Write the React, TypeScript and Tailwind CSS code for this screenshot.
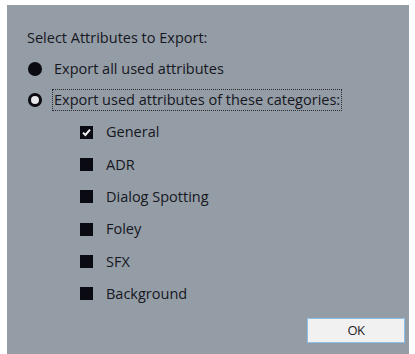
import React from 'react'

const categories = [
  { name: 'General', checked: true },
  { name: 'ADR', checked: false },
  { name: 'Dialog Spotting', checked: false },
  { name: 'Foley', checked: false },
  { name: 'SFX', checked: false },
  { name: 'Background', checked: false },
]

function Box({ checked }: { checked: boolean }) {
  return (
    <div className="w-[13px] h-[13px] bg-[#0a0a12] flex items-center justify-center shrink-0">
      {checked && (
        <svg width="11" height="11" viewBox="0 0 11 11">
          <path d="M2 5.6 L4.4 8 L9 2.6" stroke="#f2f2f2" strokeWidth="2" fill="none" />
        </svg>
      )}
    </div>
  )
}

export default function App() {
  return (
    <div className="w-[415px] h-[354px] bg-white pl-[7px] pt-[5px] pr-[6px] overflow-hidden" style={{ fontFamily: '"Open Sans", "Noto Sans", sans-serif' }}>
      <div className="h-full bg-[#949da5] text-[#16161f] text-[14.5px] flex flex-col pl-[20px] pt-[24px]">
        <div className="leading-[18px]">Select Attributes to Export:</div>

        <div className="flex items-center gap-[12px] mt-[12px] h-[20px]">
          <div className="w-[14px] h-[14px] rounded-full bg-[#0a0a10] ml-[1px]" />
          <span>Export all used attributes</span>
        </div>

        <div className="flex items-center gap-[10px] mt-[10px] h-[22px]">
          <div className="w-[14px] h-[14px] rounded-full border-[3px] border-[#0a0a10] bg-[#e8e8ea] ml-[1px]" />
          <span className="border border-dotted border-[#2a2a30] px-[1px] leading-[20px]">Export used attributes of these categories:</span>
        </div>

        <div className="flex flex-col pl-[53px] mt-[12px] gap-[14.4px]">
          {categories.map((c) => (
            <div key={c.name} className="flex items-center gap-[13px] h-[18px]">
              <Box checked={c.checked} />
              <span>{c.name}</span>
            </div>
          ))}
        </div>

        <div className="flex justify-end mt-auto pr-[4px] pb-[11px]">
          <button className="w-[98px] h-[25px] bg-[#f1f1f2] border border-[#8cc0e8] text-[13px] text-[#222] tracking-[-0.5px]">
            OK
          </button>
        </div>
      </div>
    </div>
  )
}
